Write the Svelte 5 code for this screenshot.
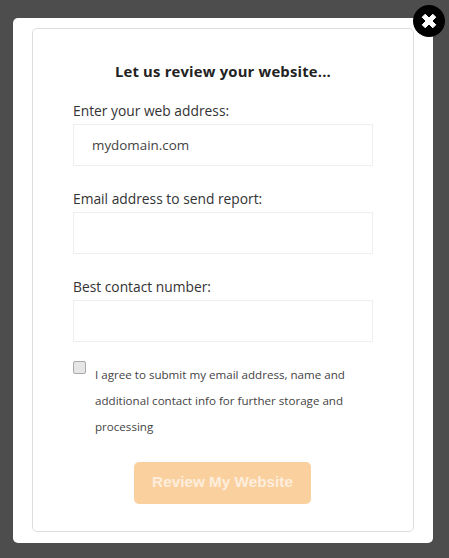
<script>
  let url = $state('mydomain.com');
</script>

<div class="page">
  <div class="modal">
    <button class="close" aria-label="Close">
      <svg viewBox="0 0 20 20" width="20" height="20"><path d="M3.2 6.2 6.2 3.2 10 7l3.8-3.8 3 3L13 10l3.8 3.8-3 3L10 13l-3.8 3.8-3-3L7 10z" fill="#fff" stroke="#fff" stroke-width="1" stroke-linejoin="round"/></svg>
    </button>
    <div class="card">
      <h2>Let us review your website...</h2>
      <label class="field">
        <span>Enter your web address:</span>
        <input type="text" bind:value={url} />
      </label>
      <label class="field">
        <span>Email address to send report:</span>
        <input type="text" />
      </label>
      <label class="field">
        <span>Best contact number:</span>
        <input type="text" />
      </label>
      <label class="agree">
        <input type="checkbox" />
        <span>I agree to submit my email address, name and additional contact info for further storage and processing</span>
      </label>
      <div class="actions">
        <button class="submit">Review My Website</button>
      </div>
    </div>
  </div>
</div>

<style>
  :global(body) {
    margin: 0;
    background: #4d4d4d;
    font-family: "Open Sans", "Noto Sans", sans-serif;
    color: #333;
  }
  .page {
    box-sizing: border-box;
    height: 558px;
    padding: 18px 16px 15px 13px;
    overflow: hidden;
  }
  .modal {
    position: relative;
    box-sizing: border-box;
    height: 525px;
    padding: 10px 19px 11px;
    background: #fff;
    border-radius: 5px;
  }
  .close {
    position: absolute;
    top: -13px;
    right: -12px;
    width: 32px;
    height: 32px;
    padding: 0;
    border: 0;
    border-radius: 50%;
    background: #000;
    display: flex;
    align-items: center;
    justify-content: center;
  }
  .card {
    box-sizing: border-box;
    height: 504px;
    padding: 32px 40px 0;
    border: 1px solid #ddd;
    border-radius: 5px;
  }
  h2 {
    margin: 0 0 19px;
    font-size: 14.8px;
    line-height: 20px;
    font-weight: 700;
    text-align: center;
    color: #222;
    letter-spacing: 0.2px;
  }
  .field {
    display: block;
    margin-bottom: 22px;
  }
  .field span {
    display: block;
    height: 24px;
    font-size: 13.8px;
    line-height: 22px;
    color: #333;
  }
  .field input {
    display: block;
    box-sizing: border-box;
    width: 300px;
    height: 42px;
    padding: 0 18px;
    border: 1px solid #eee;
    outline: none;
    background: #fff;
    font: 13.4px "Open Sans", "Noto Sans", sans-serif;
    color: #444;
  }
  .agree {
    display: flex;
    align-items: flex-start;
    margin-top: -3px;
  }
  .agree input {
    appearance: none;
    box-sizing: border-box;
    width: 13px;
    height: 13px;
    margin: 0 9px 0 0;
    flex: none;
    background: #e6e6e6;
    border: 1px solid #aaa;
    border-radius: 2px;
  }
  .agree span {
    display: block;
    margin-top: 1px;
    font-size: 11.6px;
    line-height: 26px;
    color: #444;
  }
  .actions {
    display: flex;
    justify-content: center;
    margin-top: 22px;
    padding-right: 1px;
  }
  .submit {
    width: 177px;
    height: 42px;
    padding: 0 0 2px;
    border: 0;
    border-radius: 5px;
    background: #fbd09f;
    color: #fdeedd;
    font: 700 15.3px "Liberation Sans", Arial, sans-serif;
  }
</style>
